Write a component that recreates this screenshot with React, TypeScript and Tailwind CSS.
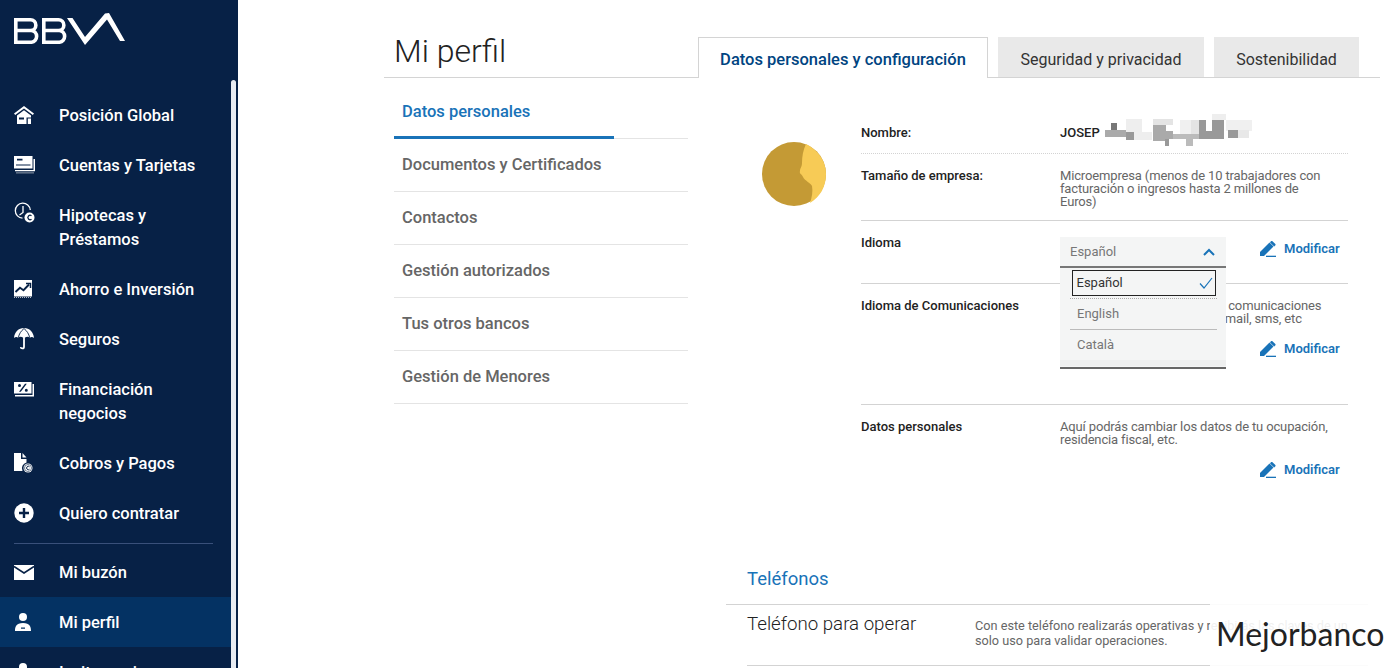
import type { ReactNode } from "react";

const navTop = [
  { label: ["Posición Global"], icon: <HomeIcon /> },
  { label: ["Cuentas y Tarjetas"], icon: <CardsIcon /> },
  { label: ["Hipotecas y", "Préstamos"], icon: <ClockEuroIcon /> },
  { label: ["Ahorro e Inversión"], icon: <ChartIcon /> },
  { label: ["Seguros"], icon: <UmbrellaIcon /> },
  { label: ["Financiación", "negocios"], icon: <PercentIcon /> },
  { label: ["Cobros y Pagos"], icon: <FileEuroIcon /> },
  { label: ["Quiero contratar"], icon: <PlusIcon /> },
];

const sideLinks = [
  "Datos personales",
  "Documentos y Certificados",
  "Contactos",
  "Gestión autorizados",
  "Tus otros bancos",
  "Gestión de Menores",
];

// blurred surname, drawn as blocks (x, y, w, h) from x=1104 / y=112 in the page
const namePixels = [
  [23, 6, 16, 13, "#eee"],
  [31, 19, 18, 8, "#eee"],
  [50, 6, 20, 6, "#e4e4e4"],
  [77, 7, 11, 14, "#f0f0f0"],
  [88, 7, 8, 14, "#e4e4e4"],
  [109, 1, 14, 6, "#eee"],
  [123, 7, 26, 11, "#f0f0f0"],
  [135, 17, 11, 8, "#e8e8e8"],
  [8, 10, 6, 7, "#777"],
  [2, 17, 21, 7, "#aaa"],
  [23, 19, 8, 8, "#999"],
  [50, 12, 13, 16, "#aaa"],
  [63, 18, 7, 8, "#aaa"],
  [62, 26, 4, 7, "#999"],
  [70, 21, 26, 5, "#bbb"],
  [83, 26, 7, 7, "#bbb"],
  [96, 7, 7, 19, "#999"],
  [103, 18, 6, 8, "#999"],
  [109, 7, 12, 19, "#999"],
  [125, 17, 10, 8, "#999"],
] as const;

function HomeIcon() {
  return (
    <svg viewBox="0 0 20 20" className="h-5 w-5 fill-white">
      <path d="M10 1 0 8.500 1.200 10 10 3.400 18.800 10 20 8.500Z" />
      <path d="M10 5.200 3 10.500V19H12.500v-6.500H17V19h0v-8.500ZM5 12.500h5v2H5Z" fillRule="evenodd" />
      <path d="M13.800 13.500H17V19h-3.200Z" />
    </svg>
  );
}

function CardsIcon() {
  return (
    <svg viewBox="0 0 22 18" className="h-[18px] w-[22px] fill-white">
      <path d="M0 0h18.500v12.500H0ZM3 2.800v1.600h5.500V2.800ZM2 8.600v1h14.500v-1Z" fillRule="evenodd" />
      <path d="M1 14h18.500V3h1.500V15.200H1Z" />
      <path d="M2 16.500h18v.8H2Z" opacity=".7" />
    </svg>
  );
}

function ClockEuroIcon() {
  return (
    <svg viewBox="0 0 22 22" className="h-[22px] w-[22px] -translate-y-[2px]">
      <path d="M8.500 16.200A7.500 7.500 0 1 1 16.300 8" className="fill-none stroke-white" strokeWidth="1.300" />
      <path d="M9 4v6.500L5.500 13" className="fill-none stroke-white" strokeWidth="1.300" />
      <circle cx="15.500" cy="15.500" r="5" className="fill-white" />
      <path d="M17.500 13.800a2.200 2.200 0 1 0 0 3.400" className="fill-none stroke-[#072146]" strokeWidth="1.300" />
    </svg>
  );
}

function ChartIcon() {
  return (
    <svg viewBox="0 0 18 18" className="h-[18px] w-[18px]">
      <path d="M0 0h18v16.500H0Z" className="fill-white" />
      <path d="M1.500 12 6 7.800l3.500 2.400L15 4.500" className="fill-none stroke-[#072146]" strokeWidth="1.900" />
      <path d="M12 3.500h4.500V8" className="fill-none stroke-[#072146]" strokeWidth="1.500" />
      <path d="M0 17.500h18" className="stroke-white" strokeWidth=".7" strokeDasharray="1 1" />
    </svg>
  );
}

function UmbrellaIcon() {
  return (
    <svg viewBox="0 0 20 22" className="h-[22px] w-5 fill-white">
      <path d="M10 0C4.500 0 .5 4 0 10c1.200-1.400 3-1.500 4.200-.2C5.500 8.400 7.500 8.400 8.800 9.500h2.400c1.300-1.100 3.300-1.100 4.600.3C17 8.500 18.800 8.600 20 10 19.500 4 15.500 0 10 0Z" />
      <path d="M10 .5C7 3 5 6 4.300 9.800M10 .5C13 3 15 6 15.700 9.800" className="fill-none stroke-[#072146]" strokeWidth=".9" />
      <path d="M9.100 9h1.800v9.700a2.500 2.500 0 0 1-5 .2h1.500c.1 1 1.700 1 1.700-.2Z" />
    </svg>
  );
}

function PercentIcon() {
  return (
    <svg viewBox="0 0 20 15" className="h-[15px] w-5 fill-white">
      <path d="M0 0h17.500v11.500H0ZM11 1.800 5 9.700h1.800l6-7.900ZM5.500 2a1.500 1.500 0 1 0 0 3 1.500 1.500 0 0 0 0-3Zm6.800 4.700a1.500 1.500 0 1 0 0 3 1.500 1.500 0 0 0 0-3Z" fillRule="evenodd" />
      <path d="M1 13h17.500V2H20v12.500H1Z" />
    </svg>
  );
}

function FileEuroIcon() {
  return (
    <svg viewBox="0 0 19 20" className="h-5 w-[19px]">
      <path d="M0 0h7v6h5.500v3.500a6 6 0 0 0-4 8.500H0Z" className="fill-white" />
      <path d="M8.500 0 12.500 4.500H8.500Z" className="fill-white" />
      <circle cx="14" cy="15" r="4.500" className="fill-white" />
      <circle cx="14" cy="15" r="3.500" className="fill-none stroke-[#072146]" strokeWidth=".6" />
      <path d="M15.500 13.800a1.700 1.700 0 1 0 0 2.400" className="fill-none stroke-[#072146]" strokeWidth="1" />
    </svg>
  );
}

function PlusIcon() {
  return (
    <svg viewBox="0 0 20 20" className="h-5 w-5">
      <circle cx="10" cy="10" r="9.700" className="fill-white" />
      <path d="M10 5v10M5 10h10" className="stroke-[#072146]" strokeWidth="2.400" />
    </svg>
  );
}

function MailIcon() {
  return (
    <svg viewBox="0 0 20 15" className="h-[15px] w-5">
      <path d="M0 0h20v15H0Z" className="fill-white" />
      <path d="M0 1.500 10 8l10-6.500" className="fill-none stroke-[#072146]" strokeWidth="1.500" />
    </svg>
  );
}

function UserIcon() {
  return (
    <svg viewBox="0 0 18 18" className="h-[18px] w-[18px] fill-white">
      <circle cx="9" cy="4" r="4" />
      <path d="M1 18c0-4 1-8 8-8s8 4 8 8Zm6-3.500v1.200h4v-1.200Z" fillRule="evenodd" />
    </svg>
  );
}

function PencilIcon() {
  return (
    <svg viewBox="0 0 16 16" className="h-4 w-4 fill-[#1973b8]">
      <path d="M0 15v-4L9.500 1.500l4 4L4 15Z" />
      <path d="M10.800.4a1.300 1.300 0 0 1 1.900 0l2.400 2.300a1.300 1.300 0 0 1 0 1.900l-.9.9-4.300-4.200Z" />
      <path d="M6 14.700h10V16H6Z" />
    </svg>
  );
}

function BbvaLogo() {
  return (
    <svg viewBox="0 0 112 34" className="h-[34px] w-[112px]">
      <g className="fill-none stroke-white" strokeWidth="3.600">
        <path d="M1.800 7.800h14.700a5.300 5.300 0 0 1 0 10.700H1.800 17.500a5.900 5.900 0 0 1 0 11.700H1.800Z" />
        <path d="M29.800 7.800h14.700a5.300 5.300 0 0 1 0 10.700H29.800 45.500a5.900 5.900 0 0 1 0 11.700H29.800Z" />
      </g>
      <path d="M53 6h5.500L71 25 91 1.500 95 1l16 28h-5L93 7.500 71 33Z" className="fill-white" />
    </svg>
  );
}

function NavItem({ lines, icon, active }: { lines: readonly string[]; icon: ReactNode; active?: boolean }) {
  return (
    <div className={`flex items-start py-[12.5px] ${active ? "bg-[#043263]" : ""}`}>
      <div className="flex h-[25px] w-[59px] shrink-0 items-center pl-[14px]">{icon}</div>
      <div className="text-[16.5px] leading-[25px] font-medium text-white">
        {lines.map((line, i) => (
          <div key={line} className={i > 0 ? "-mt-px" : ""}>
            {line}
          </div>
        ))}
      </div>
    </div>
  );
}

function Sidebar() {
  return (
    <aside className="flex h-[668px] w-[238px] shrink-0 overflow-hidden bg-[#072146]">
      <div className="w-[231px] shrink-0 overflow-hidden">
        <div className="h-[90px] pt-[12px] pl-[14px]">
          <BbvaLogo />
        </div>
        {navTop.map((item) => (
          <NavItem key={item.label[0]} lines={item.label} icon={item.icon} />
        ))}
        <div className="mx-[14px] mt-[5px] mb-[3px] h-px w-[199px] bg-[#39507a]" />
        <NavItem lines={["Mi buzón"]} icon={<MailIcon />} />
        <NavItem lines={["Mi perfil"]} icon={<UserIcon />} active />
        <NavItem lines={["Invitar amigos"]} icon={<UserIcon />} />
      </div>
      <div className="mt-[80px] h-[588px] w-[5px] rounded-t-full bg-[#e8ecf2]" />
    </aside>
  );
}

function Tab({ label, active, width }: { label: string; active?: boolean; width: string }) {
  if (active) {
    return (
      <div className={`-mb-px flex h-[41px] items-center justify-center border border-b-0 border-[#d4d4d4] bg-white pt-[5px] text-[16.5px] font-medium text-[#004481] ${width}`}>
        {label}
      </div>
    );
  }
  return <div className={`flex h-[40px] items-center justify-center bg-[#e9e9e9] pt-[5px] text-base text-[#333] ${width}`}>{label}</div>;
}

function Modify() {
  return (
    <div className="flex w-[80px] items-center gap-2 text-[13px] leading-4 font-semibold text-[#1973b8]">
      <PencilIcon />
      Modificar
    </div>
  );
}

function Row({ label, children, className }: { label: string; children?: ReactNode; className: string }) {
  return (
    <div className={`relative flex border-[#d3d3d3] ${className}`}>
      <div className="w-[199px] shrink-0 text-[13px] leading-[14px] font-medium text-[#222]">{label}</div>
      <div className="min-w-0 flex-1">{children}</div>
    </div>
  );
}

function Desc({ children }: { children: ReactNode }) {
  return <p className="max-w-[270px] text-[13px] leading-[13px] tracking-[-0.15px] text-[#666]">{children}</p>;
}

function LanguageMenu() {
  return (
    <div className="absolute top-[16px] left-[199px] z-10 h-[132px] w-[166px] border-b-2 border-[#666] bg-[#f4f5f5]">
      <div className="flex h-[31px] items-center justify-between border-b-2 border-[#777] pr-[11px] pl-[10px] text-[13px] text-[#777]">
        Español
        <svg viewBox="0 0 12 8" className="h-2 w-3 fill-none stroke-[#1973b8]" strokeWidth="2">
          <path d="M1 7l5-5 5 5" />
        </svg>
      </div>
      <div className="px-[10px] pt-[2px]">
        <div className="ml-[2px] flex h-[26px] w-[144px] items-center justify-between border-[1.5px] border-[#222] pr-[2px] pl-[3.5px] text-[13px] text-[#333]">
          Español
          <svg viewBox="0 0 14 12" className="h-3 w-[14px] fill-none stroke-[#1973b8]" strokeWidth="1.200">
            <path d="M1 6.500 5 11l8-10" />
          </svg>
        </div>
        <div className="mt-[2px] flex h-[31px] w-[147px] items-center border-t border-dotted border-[#aaa] pl-[7px] text-[13px] text-[#777]">
          English
        </div>
        <div className="flex h-[31px] w-[147px] items-center border-t border-[#bbb] pl-[7px] text-[13px] text-[#777]">
          Català
        </div>
      </div>
      <div className="h-[6px] bg-[#eeefef]" />
    </div>
  );
}

function Profile() {
  return (
    <div className="flex pl-[74px]">
      <svg viewBox="0 0 64 64" className="mt-[64px] h-16 w-16 shrink-0">
        <ellipse cx="32" cy="32" rx="32" ry="32" fill="#c49a35" />
        <path d="M44 2C54 7 64 17 64 32c0 13-6 23-16 29 2-6 3-12 2-17-1-3-7-5-9-9-1-3-4-3-3-6 0-3 2-4 2-8 0-6 1-13 4-19Z" fill="#f7cb56" />
      </svg>
      <div className="ml-[35px] w-[487px] pt-[37px]">
        <Row label="Nombre:" className="h-[39px] items-center border-b border-dotted pb-[3px]">
          <div className="flex items-center text-[13px] font-medium text-[#222]">
            JOSEP
            <svg viewBox="0 0 152 34" className="-mt-[6px] ml-[3px] h-[34px] w-[152px]">
              {namePixels.map(([x, y, w, h, fill]) => (
                <rect key={`${x}-${y}`} x={x} y={y} width={w} height={h} fill={fill} />
              ))}
            </svg>
          </div>
        </Row>
        <Row label="Tamaño de empresa:" className="h-[67px] border-b pt-[15px]">
          <Desc>Microempresa (menos de 10 trabajadores con facturación o ingresos hasta 2 millones de Euros)</Desc>
        </Row>
        <Row label="Idioma" className="h-[63px] border-b pt-[15px]">
          <LanguageMenu />
          <div className="flex justify-end pt-[5px] pr-[8px]">
            <Modify />
          </div>
        </Row>
        <Row label="Idioma de Comunicaciones" className="h-[121px] border-b pt-[15px]">
          <Desc>Selecciona tu idioma para las comunicaciones por carta, por correo postal, email, sms, etc</Desc>
          <div className="flex justify-end pt-[16px] pr-[8px]">
            <Modify />
          </div>
        </Row>
        <Row label="Datos personales" className="pt-[15px]">
          <Desc>Aquí podrás cambiar los datos de tu ocupación, residencia fiscal, etc.</Desc>
          <div className="flex justify-end pt-[16px] pr-[8px]">
            <Modify />
          </div>
        </Row>
      </div>
    </div>
  );
}

function Phones() {
  return (
    <div className="mt-[87px] ml-[38px] w-[642px]">
      <h2 className="pl-[21px] text-[18.5px] leading-[28px] text-[#1973b8]">Teléfonos</h2>
      <div className="mt-[11px] border-t border-[#d3d3d3] pl-[21px]">
        <div className="flex h-[61px] border-b border-[#d3d3d3] pt-[7px]">
          <div className="w-[228px] shrink-0 text-[18.7px] leading-6 font-light text-[#222]">Teléfono para operar</div>
          <p className="max-w-[388px] pt-[6px] text-[12.7px] leading-[15px] text-[#666]">
            Con este teléfono realizarás operativas y recibirás las claves de un solo uso para validar operaciones.
          </p>
        </div>
      </div>
    </div>
  );
}

export default function App() {
  return (
    <div className="relative flex h-[668px] w-[1400px] overflow-hidden bg-white [font-family:Roboto,sans-serif]">
      <Sidebar />
      <main className="min-w-0 flex-1 pl-[146px]">
        <header className="flex h-[78px] w-[996px] items-end border-b border-[#d4d4d4]">
          <h1 className="w-[314px] pb-[4px] pl-[10px] text-[32px] leading-[44px] font-light text-[#222]">Mi perfil</h1>
          <div className="flex items-end gap-[10px]">
            <Tab label="Datos personales y configuración" active width="w-[290px]" />
            <Tab label="Seguridad y privacidad" width="w-[206px]" />
            <Tab label="Sostenibilidad" width="w-[145px]" />
          </div>
        </header>
        <div className="flex">
          <nav className="mt-[8px] ml-[10px] w-[294px] shrink-0">
            {sideLinks.map((link, i) => (
              <div key={link} className="relative flex h-[53px] items-center border-b border-[#e4e4e4] pl-[8px] text-[16.5px] font-medium">
                <span className={i === 0 ? "text-[#1973b8]" : "text-[#666]"}>{link}</span>
                {i === 0 && <div className="absolute bottom-[-1px] left-0 h-[3px] w-[220px] bg-[#1973b8]" />}
              </div>
            ))}
          </nav>
          <div className="min-w-0 flex-1">
            <Profile />
            <Phones />
          </div>
        </div>
      </main>
      <div className="absolute top-[600px] right-0 flex h-[68px] w-[190px] items-center bg-white/90 pl-[6px] text-[32px] leading-[44px] text-[#222] [font-family:Lato,sans-serif]">
        Mejorbanco
      </div>
    </div>
  );
}
